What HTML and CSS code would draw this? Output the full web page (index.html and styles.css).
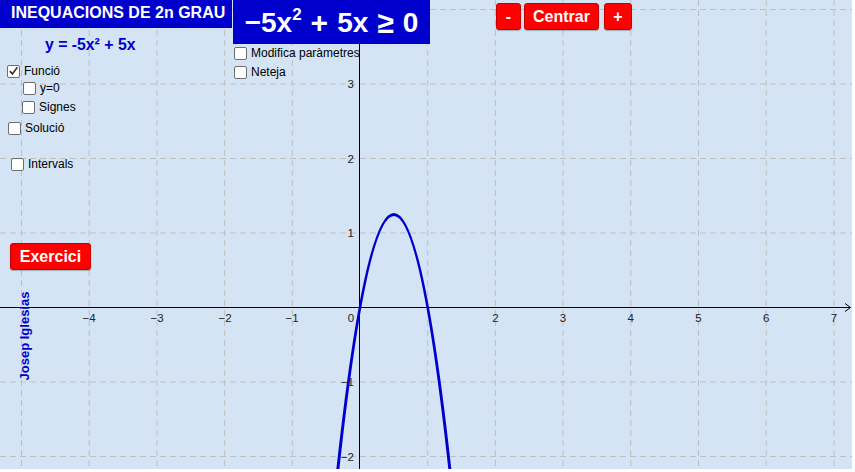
FILE: index.html
```html
<!DOCTYPE html>
<html lang="ca">
<head>
<meta charset="utf-8">
<title>Inequacions de 2n grau</title>
<link rel="stylesheet" href="styles.css">
</head>
<body>
<div class="applet">
  <svg class="graph" width="852" height="469" viewBox="0 0 852 469" xmlns="http://www.w3.org/2000/svg">
    <g class="grid">
      <line x1="21.5" y1="0" x2="21.5" y2="469"/>
      <line x1="89.2" y1="0" x2="89.2" y2="469"/>
      <line x1="157" y1="0" x2="157" y2="469"/>
      <line x1="224.6" y1="0" x2="224.6" y2="469"/>
      <line x1="292.3" y1="0" x2="292.3" y2="469"/>
      <line x1="427.7" y1="0" x2="427.7" y2="469"/>
      <line x1="495.4" y1="0" x2="495.4" y2="469"/>
      <line x1="563" y1="0" x2="563" y2="469"/>
      <line x1="630.8" y1="0" x2="630.8" y2="469"/>
      <line x1="698.5" y1="0" x2="698.5" y2="469"/>
      <line x1="766.2" y1="0" x2="766.2" y2="469"/>
      <line x1="834" y1="0" x2="834" y2="469"/>
      <line x1="0" y1="9.5" x2="852" y2="9.5"/>
      <line x1="0" y1="84" x2="852" y2="84"/>
      <line x1="0" y1="158.5" x2="852" y2="158.5"/>
      <line x1="0" y1="233" x2="852" y2="233"/>
      <line x1="0" y1="382" x2="852" y2="382"/>
      <line x1="0" y1="456.5" x2="852" y2="456.5"/>
    </g>
    <g class="axes">
      <line x1="0" y1="307.5" x2="850" y2="307.5"/>
      <polyline points="845,303.5 850.5,307.5 845,311.5" fill="none"/>
      <line x1="359.5" y1="0" x2="359.5" y2="469"/>
    </g>
    <g class="labels">
      <text x="89" y="322" text-anchor="middle">−4</text>
      <text x="157" y="322" text-anchor="middle">−3</text>
      <text x="225" y="322" text-anchor="middle">−2</text>
      <text x="292" y="322" text-anchor="middle">−1</text>
      <text x="351" y="322" text-anchor="middle">0</text>
      <text x="495.4" y="322" text-anchor="middle">2</text>
      <text x="563" y="322" text-anchor="middle">3</text>
      <text x="630.8" y="322" text-anchor="middle">4</text>
      <text x="698.5" y="322" text-anchor="middle">5</text>
      <text x="766.2" y="322" text-anchor="middle">6</text>
      <text x="834" y="322" text-anchor="middle">7</text>
      <text x="354" y="88" text-anchor="end">3</text>
      <text x="354" y="162.5" text-anchor="end">2</text>
      <text x="354" y="237" text-anchor="end">1</text>
      <text x="354" y="386" text-anchor="end">−1</text>
      <text x="354" y="460.5" text-anchor="end">−2</text>
    </g>
    <path class="curve" d="M332.92,516.1 Q393.85,-87.35 454.78,516.1"/>
  </svg>

  <div class="title">INEQUACIONS DE 2n GRAU</div>
  <div class="formula"><span>−5x<sup>2</sup></span><span class="op">+</span><span>5x</span><span class="op">≥</span><span>0</span></div>
  <div class="func">y = -5x² + 5x</div>

  <label class="cb cb-funcio"><span class="box checked"><svg width="12" height="12" viewBox="0 0 12 12"><path d="M2 6.2 L4.8 9.2 L10.2 2" fill="none" stroke="#333" stroke-width="1.8"/></svg></span>Funció</label>
  <label class="cb cb-y0"><span class="box"></span>y=0</label>
  <label class="cb cb-signes"><span class="box"></span>Signes</label>
  <label class="cb cb-solucio"><span class="box"></span>Solució</label>
  <label class="cb cb-intervals"><span class="box"></span>Intervals</label>
  <label class="cb cb-modifica"><span class="box"></span>Modifica paràmetres</label>
  <label class="cb cb-neteja"><span class="box"></span>Neteja</label>

  <div class="zoombar">
    <button class="btn btn-minus">-</button>
    <button class="btn btn-centrar">Centrar</button>
    <button class="btn btn-plus">+</button>
  </div>

  <button class="btn btn-exercici">Exercici</button>

  <div class="author">Josep Iglesias</div>
</div>
</body>
</html>
```

FILE: styles.css
```css
html, body {
  margin: 0;
  padding: 0;
  background: #ffffff;
}

.applet {
  position: relative;
  width: 852px;
  height: 469px;
  background: #d4e4f5;
  overflow: hidden;
  font-family: "Liberation Sans", Arial, sans-serif;
}

.graph {
  display: block;
}

.grid line {
  stroke: #bfbfbf;
  stroke-width: 1;
  stroke-dasharray: 6 4;
}

.axes line,
.axes polyline {
  stroke: #000000;
  stroke-width: 1;
}

.labels text {
  font-family: "Liberation Sans", Arial, sans-serif;
  font-size: 11.5px;
  fill: #222222;
}

.curve {
  fill: none;
  stroke: #0000cc;
  stroke-width: 3;
}

.title {
  position: absolute;
  left: 0;
  top: 0;
  width: 232px;
  height: 28px;
  background: #0000cc;
  color: #ffffff;
  font-weight: bold;
  font-size: 16px;
  line-height: 26px;
  padding-left: 11px;
  box-sizing: border-box;
  white-space: nowrap;
}

.formula {
  position: absolute;
  left: 233px;
  top: 0;
  width: 197px;
  height: 44px;
  background: #0000cc;
  color: #ffffff;
  font-family: "Liberation Sans", Arial, sans-serif;
  font-weight: bold;
  font-size: 28px;
  display: flex;
  align-items: center;
  justify-content: center;
  gap: 9px;
  white-space: nowrap;
  padding-top: 2px;
  box-sizing: border-box;
}

.formula sup {
  font-size: 17px;
  vertical-align: 12px;
  line-height: 0;
}

.formula .op {
  font-weight: bold;
  font-size: 30px;
}

.func {
  position: absolute;
  left: 45px;
  top: 36px;
  color: #0000cc;
  font-weight: bold;
  font-size: 15.8px;
  white-space: nowrap;
}

.cb {
  position: absolute;
  display: flex;
  align-items: center;
  gap: 4px;
  font-size: 12px;
  color: #000000;
  white-space: nowrap;
}

.box {
  width: 11px;
  height: 11px;
  border: 1.5px solid #6e6e6e;
  border-radius: 2px;
  background: #ffffff;
  display: flex;
  align-items: center;
  justify-content: center;
}

.cb-funcio { left: 7px; top: 64px; }
.cb-y0 { left: 23px; top: 81px; }
.cb-signes { left: 22px; top: 100px; }
.cb-solucio { left: 8px; top: 121px; }
.cb-intervals { left: 11px; top: 157px; }
.cb-modifica { left: 234px; top: 46px; }
.cb-neteja { left: 234px; top: 65px; }

.btn {
  position: absolute;
  margin: 0;
  padding: 0;
  background: #ff0000;
  color: #ffffff;
  border: 1px solid #c80000;
  border-radius: 3px;
  font-family: "Liberation Sans", Arial, sans-serif;
  font-weight: bold;
  font-size: 16px;
  box-shadow: 0 1px 1px rgba(0, 0, 0, 0.25);
}

.zoombar {
  position: absolute;
  left: 496px;
  top: 3px;
  width: 137px;
  height: 27px;
}

.btn-minus { left: 0; top: 0; width: 25px; height: 27px; }
.btn-centrar { left: 28px; top: 0; width: 75px; height: 27px; }
.btn-plus { left: 108px; top: 0; width: 28px; height: 27px; }

.btn-exercici {
  left: 10px;
  top: 243px;
  width: 81px;
  height: 27px;
}

.author {
  position: absolute;
  left: 23.5px;
  top: 335.5px;
  transform: translate(-50%, -50%) rotate(-90deg);
  color: #0000cc;
  font-weight: bold;
  font-size: 13px;
  white-space: nowrap;
}
```
